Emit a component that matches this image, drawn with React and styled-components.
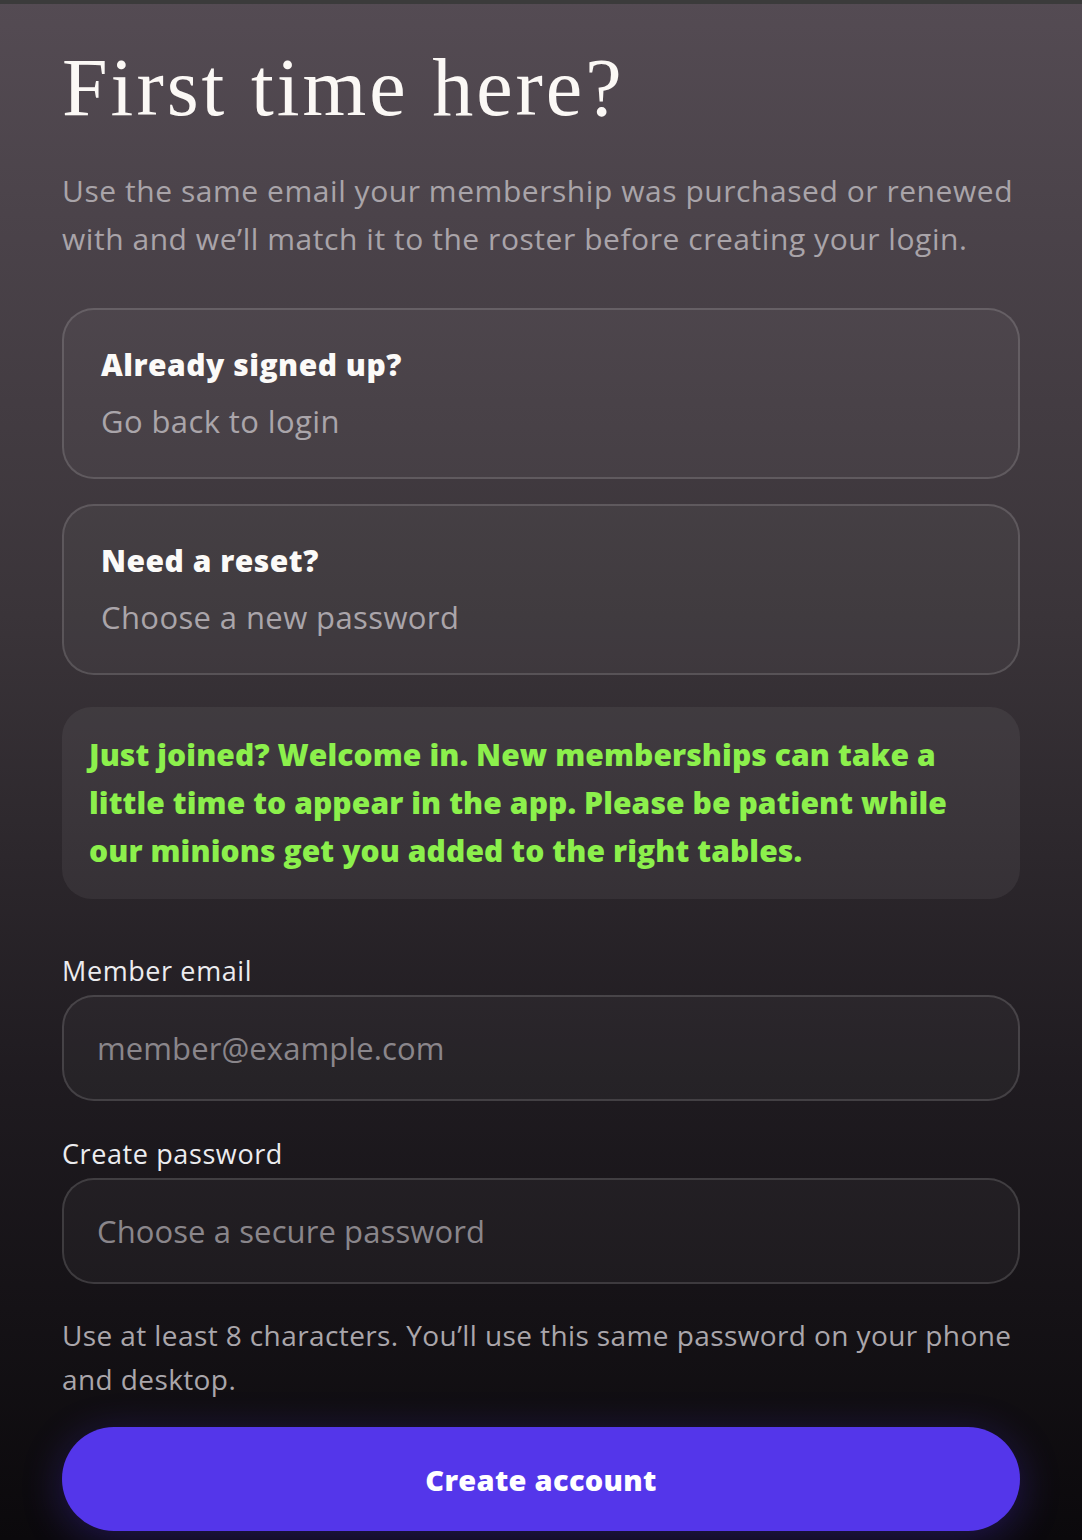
import styled, { createGlobalStyle } from 'styled-components';

const GlobalStyle = createGlobalStyle`
  html, body {
    margin: 0;
    padding: 0;
    background: #0c0a0e;
  }
  body {
    font-family: 'Open Sans', 'Noto Sans', sans-serif;
    -webkit-font-smoothing: antialiased;
  }
`;

export default function App() {
  return (
    <>
      <GlobalStyle />
      <Page>
        <TopStrip />
        <Content>
          <Title>First time here?</Title>
          <Intro>
            Use the same email your membership was purchased or renewed with
            and we’ll match it to the roster before creating your login.
          </Intro>

          <LinkCard href="#login">
            <CardTitle>Already signed up?</CardTitle>
            <CardText>Go back to login</CardText>
          </LinkCard>
          <LinkCard href="#reset">
            <CardTitle>Need a reset?</CardTitle>
            <CardText>Choose a new password</CardText>
          </LinkCard>

          <Notice>
            Just joined? Welcome in. New memberships can take a little time to
            appear in the app. Please be patient while our minions get you
            added to the right tables.
          </Notice>

          <Form onSubmit={(e) => e.preventDefault()}>
            <Field>
              <Label htmlFor="email">Member email</Label>
              <Input id="email" type="email" placeholder="member@example.com" />
            </Field>
            <Field>
              <Label htmlFor="password">Create password</Label>
              <Input
                id="password"
                type="password"
                placeholder="Choose a secure password"
              />
            </Field>
            <Hint>
              Use at least 8 characters. You’ll use this same password on your
              phone and desktop.
            </Hint>
            <SubmitButton type="submit">Create account</SubmitButton>
          </Form>
        </Content>
      </Page>
    </>
  );
}

const Page = styled.div`
  min-height: 1540px;
  background: linear-gradient(180deg, #544b53 0%, #3a3439 40%, #1f1b20 70%, #0b090c 100%);
  overflow: hidden;
`;

const TopStrip = styled.div`
  height: 4px;
  background: #3b3b3b;
`;

const Content = styled.main`
  width: 958px;
  margin: 0 auto;
  padding-top: 38px;
  display: flex;
  flex-direction: column;
`;

const Title = styled.h1`
  margin: 0;
  font-family: 'Liberation Serif', 'DejaVu Serif', serif;
  font-weight: 400;
  font-size: 82px;
  line-height: 92px;
  color: #fbf8f5;
  letter-spacing: 3px;
`;

const Intro = styled.p`
  margin: 33px 0 45px;
  font-size: 30px;
  line-height: 48px;
  color: #a9a4a9;
  letter-spacing: 0.55px;
`;

const LinkCard = styled.a`
  display: flex;
  flex-direction: column;
  gap: 16px;
  height: 171px;
  box-sizing: border-box;
  padding: 35px 37px;
  margin-bottom: 25px;
  border: 2px solid rgba(255, 255, 255, 0.14);
  border-radius: 32px;
  background: rgba(255, 255, 255, 0.035);
  text-decoration: none;
`;

const CardTitle = styled.span`
  font-size: 30px;
  line-height: 40px;
  font-weight: 800;
  color: #fbfaf8;
  letter-spacing: 0.5px;
`;

const CardText = styled.span`
  font-size: 31px;
  line-height: 40px;
  color: #aaa5aa;
  letter-spacing: 0.4px;
`;

const Notice = styled.div`
  margin-top: 7px;
  padding: 24px 27px;
  border-radius: 30px;
  background: rgba(255, 255, 255, 0.06);
  font-size: 30px;
  line-height: 48px;
  font-weight: 800;
  color: #8cf04c;
  letter-spacing: 0.1px;
`;

const Form = styled.form`
  margin-top: 52px;
  display: flex;
  flex-direction: column;
`;

const Field = styled.div`
  display: flex;
  flex-direction: column;
  gap: 4px;
  margin-bottom: 33px;
`;

const Label = styled.label`
  font-size: 27px;
  line-height: 40px;
  color: #ececef;
  letter-spacing: 0.6px;
`;

const Input = styled.input`
  height: 106px;
  box-sizing: border-box;
  padding: 0 33px;
  border: 2px solid rgba(255, 255, 255, 0.14);
  border-radius: 32px;
  background: rgba(255, 255, 255, 0.035);
  font-family: 'Open Sans', 'Noto Sans', sans-serif;
  font-size: 31px;
  letter-spacing: 0.1px;
  color: #f4f4f4;
  outline: none;

  &::placeholder {
    color: #8a868b;
  }
`;

const Hint = styled.p`
  margin: -4px 0 26px;
  font-size: 28px;
  line-height: 44px;
  color: #aaa6ab;
  letter-spacing: 0.4px;
`;

const SubmitButton = styled.button`
  height: 104px;
  border: none;
  border-radius: 52px;
  background: #5436ea;
  color: #ffffff;
  font-family: 'Open Sans', 'Noto Sans', sans-serif;
  font-size: 29px;
  font-weight: 800;
  letter-spacing: 0.3px;
  cursor: pointer;
  box-shadow: 0 8px 40px rgba(84, 54, 234, 0.3);
`;
